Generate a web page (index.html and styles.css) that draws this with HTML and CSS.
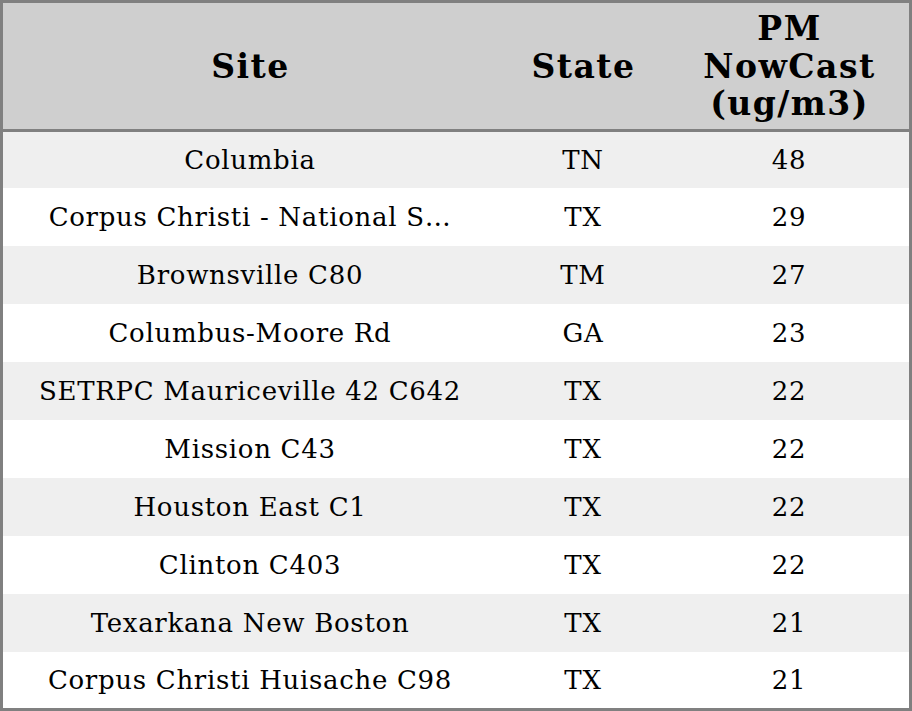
FILE: index.html
```html
<!DOCTYPE html>
<html>
<head>
<meta charset="utf-8">
<link rel="stylesheet" href="styles.css">
</head>
<body>
<table class="grid">
  <colgroup>
    <col class="c-site">
    <col class="c-state">
    <col class="c-pm">
  </colgroup>
  <thead>
    <tr><th>Site</th><th>State</th><th>PM<br>NowCast<br>(ug/m3)</th></tr>
  </thead>
  <tbody>
    <tr><td>Columbia</td><td>TN</td><td>48</td></tr>
    <tr><td>Corpus Christi - National S…</td><td>TX</td><td>29</td></tr>
    <tr><td>Brownsville C80</td><td>TM</td><td>27</td></tr>
    <tr><td>Columbus-Moore Rd</td><td>GA</td><td>23</td></tr>
    <tr><td>SETRPC Mauriceville 42 C642</td><td>TX</td><td>22</td></tr>
    <tr><td>Mission C43</td><td>TX</td><td>22</td></tr>
    <tr><td>Houston East C1</td><td>TX</td><td>22</td></tr>
    <tr><td>Clinton C403</td><td>TX</td><td>22</td></tr>
    <tr><td>Texarkana New Boston</td><td>TX</td><td>21</td></tr>
    <tr><td>Corpus Christi Huisache C98</td><td>TX</td><td>21</td></tr>
  </tbody>
</table>
</body>
</html>
```
FILE: styles.css
```css
html, body {
  margin: 0;
  padding: 0;
  background: #ffffff;
}
body {
  width: 912px;
  height: 711px;
  overflow: hidden;
  font-family: "DejaVu Serif", serif;
  color: #000;
}
.grid {
  width: 912px;
  height: 711px;
  border-collapse: separate;
  border-spacing: 0;
  border: 3px solid #808080;
  border-bottom-width: 4px;
  table-layout: fixed;
  box-sizing: border-box;
}
.c-site { width: 494px; }
.c-state { width: 172px; }
.c-pm { width: 240px; }
.grid th {
  background: #cfcfcf;
  font-size: 33px;
  font-weight: bold;
  line-height: 37.5px;
  letter-spacing: 1.5px;
  height: 125px;
  padding: 1px 0 0 1px;
  text-align: center;
  vertical-align: middle;
  border-bottom: 3px solid #808080;
}
.grid td {
  font-size: 26px;
  line-height: 30px;
  height: 58px;
  padding: 0;
  text-align: center;
  vertical-align: middle;
  white-space: nowrap;
  letter-spacing: 0.7px;
}
.grid tbody tr:first-child td,
.grid tbody tr:last-child td {
  height: 56px;
}
.grid tbody tr:nth-child(odd) td {
  background: #efefef;
}
```
